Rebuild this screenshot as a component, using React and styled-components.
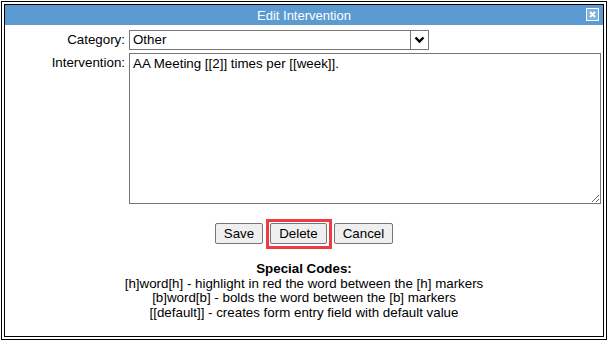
import React from "react";
import styled, { createGlobalStyle } from "styled-components";

const GlobalStyle = createGlobalStyle`
  html, body {
    margin: 0;
    padding: 0;
    background: #fff;
  }
  body {
    font-family: "Liberation Sans", Arial, sans-serif;
    font-size: 13.33px;
    color: #000;
  }
`;

const Frame = styled.div`
  box-sizing: border-box;
  width: 606px;
  height: 339px;
  margin: 1px 0 0 1px;
  border: 1px solid #000;
  padding: 2px;
`;

const Dialog = styled.div`
  box-sizing: border-box;
  height: 100%;
  border: 1px solid #000;
  display: flex;
  flex-direction: column;
`;

const TitleBar = styled.div`
  position: relative;
  height: 20px;
  background: #5b9bd1;
  color: #fff;
  font-size: 13px;
  display: flex;
  align-items: center;
  justify-content: center;
`;

const CloseButton = styled.div`
  position: absolute;
  right: 4px;
  top: 3px;
  box-sizing: border-box;
  width: 13px;
  height: 13px;
  border: 1px solid #fff;
  background: #7fb2dc;
  display: flex;
  align-items: center;
  justify-content: center;
`;

const Form = styled.div`
  display: grid;
  grid-template-columns: 120px 1fr;
  column-gap: 4px;
  row-gap: 3px;
  margin-top: 5px;
  padding-right: 2px;
`;

const Label = styled.div`
  text-align: right;
  padding-top: ${p => p.$top || 3}px;
  line-height: 15px;
`;

const Select = styled.div`
  display: flex;
  width: 300px;
  height: 20px;
`;

const SelectValue = styled.div`
  box-sizing: border-box;
  flex: 1;
  height: 20px;
  border: 1px solid #767676;
  border-right: none;
  padding: 1px 3px;
  line-height: 16px;
`;

const SelectArrow = styled.div`
  box-sizing: border-box;
  width: 19px;
  height: 20px;
  border: 1px solid #767676;
  display: flex;
  align-items: center;
  justify-content: center;
`;

const TextArea = styled.textarea`
  box-sizing: border-box;
  display: block;
  width: 472px;
  height: 151px;
  margin: 0;
  border: 1px solid #767676;
  padding: 2px 3px;
  font-family: "Liberation Sans", Arial, sans-serif;
  font-size: 13.33px;
  line-height: 15px;
  color: #000;
  resize: both;
`;

const Buttons = styled.div`
  display: flex;
  justify-content: center;
  gap: 7px;
  margin-top: 19px;
`;

const Button = styled.button`
  position: relative;
  box-sizing: border-box;
  height: 21px;
  padding: 0 8px;
  border: 1px solid #767676;
  border-radius: 2px;
  background: #efefef;
  font-family: "Liberation Sans", Arial, sans-serif;
  font-size: 13.33px;
  color: #000;

  ${p =>
    p.$marked &&
    `
    &::after {
      content: "";
      position: absolute;
      left: -5px;
      right: -6px;
      top: -5px;
      bottom: -6px;
      border: 3px solid #ee3a43;
    }
  `}
`;

const Codes = styled.div`
  margin-top: 18px;
  text-align: center;
  line-height: 14.7px;
`;

const CodesTitle = styled.div`
  font-weight: bold;
`;

function Chevron() {
  return (
    <svg width="11" height="8" viewBox="0 0 11 8">
      <path d="M1.5 1.5 L5.5 5.5 L9.5 1.5" fill="none" stroke="#000" strokeWidth="2.4" />
    </svg>
  );
}

function CloseIcon() {
  return (
    <svg width="7" height="7" viewBox="0 0 7 7">
      <path d="M1 1 L6 6 M6 1 L1 6" stroke="#fff" strokeWidth="2" />
    </svg>
  );
}

export default function App() {
  return (
    <>
      <GlobalStyle />
      <Frame>
        <Dialog>
          <TitleBar>
            Edit Intervention
            <CloseButton>
              <CloseIcon />
            </CloseButton>
          </TitleBar>
          <Form>
            <Label $top={2}>Category:</Label>
            <Select>
              <SelectValue>Other</SelectValue>
              <SelectArrow>
                <Chevron />
              </SelectArrow>
            </Select>
            <Label $top={2}>Intervention:</Label>
            <TextArea defaultValue="AA Meeting [[2]] times per [[week]]." />
          </Form>
          <Buttons>
            <Button>Save</Button>
            <Button $marked>Delete</Button>
            <Button>Cancel</Button>
          </Buttons>
          <Codes>
            <CodesTitle>Special Codes:</CodesTitle>
            <div>[h]word[h] - highlight in red the word between the [h] markers</div>
            <div>[b]word[b] - bolds the word between the [b] markers</div>
            <div>[[default]] - creates form entry field with default value</div>
          </Codes>
        </Dialog>
      </Frame>
    </>
  );
}
